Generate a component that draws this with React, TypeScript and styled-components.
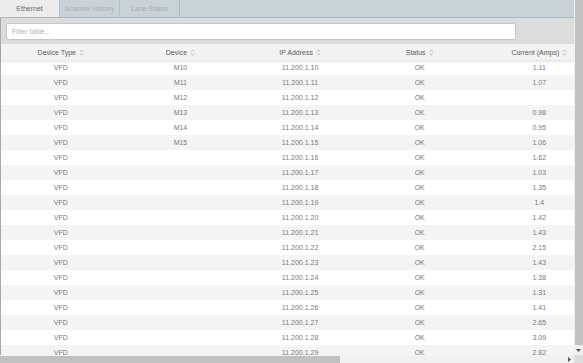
import React, { useState } from 'react'
import styled, { createGlobalStyle } from 'styled-components'

const GlobalStyle = createGlobalStyle`
  html, body {
    margin: 0;
    padding: 0;
    overflow: hidden;
  }
  body {
    font-family: "Liberation Sans", Arial, sans-serif;
  }
`

// the panel plus its own drawn scrollbars
const Frame = styled.div`
  width: 100vw;
  height: 100vh;
  display: grid;
  grid-template-columns: 1fr 9px;
  grid-template-rows: 1fr 8px;
  background: #fff;
`

const Viewport = styled.div`
  overflow: hidden;
  min-width: 0;
  min-height: 0;
`

const VBar = styled.div`
  display: flex;
  flex-direction: column;
  background: #f1f1f1;
`

const HBar = styled.div`
  display: flex;
  background: #f1f1f1;
`

const Thumb = styled.div<{ vertical?: boolean }>`
  background: #c1c1c1;
  ${({ vertical }) => (vertical ? 'flex: 0 0 345px; margin: 0 0 0 1px;' : 'flex: 0 0 340px; margin: 1px 0 0;')}
`

const Track = styled.div`
  flex: 1;
`

const ArrowBtn = styled.div`
  flex: 0 0 9px;
  display: flex;
  align-items: center;
  justify-content: center;
`

const Corner = styled.div`
  background: #dcdcdc;
`

const TabBar = styled.div`
  display: flex;
  height: 18px;
  background: #c9d2d6;
  border-bottom: 1px solid #aeb7bb;
  box-sizing: border-box;
`

const Tab = styled.div<{ active: boolean }>`
  width: 60px;
  display: flex;
  align-items: center;
  justify-content: center;
  font-size: 7px;
  color: ${({ active }) => (active ? '#666' : '#a7afb4')};
  background: ${({ active }) => (active ? '#ebebeb' : 'transparent')};
  border-right: 1px solid #b3bcc0;
  box-sizing: border-box;
  cursor: pointer;
`

const Body = styled.div`
  border-left: 1px solid #a8a8a8;
`

const FilterBar = styled.div`
  height: 26px;
  background: #dcdcdc;
  display: flex;
  align-items: center;
  padding-left: 5px;
  box-sizing: border-box;
`

const FilterInput = styled.input`
  width: 510px;
  height: 17px;
  box-sizing: border-box;
  border: 1px solid #c6c6c6;
  border-radius: 2px;
  background: #fff;
  padding: 0 5px;
  font-family: inherit;
  font-size: 7px;
  color: #666;
  outline: none;
  &::placeholder {
    color: #b4b4b4;
  }
`

const Table = styled.div`
  width: 957px;
`

const Row = styled.div<{ shade?: boolean }>`
  display: grid;
  grid-template-columns: repeat(8, 1fr);
  height: 15px;
  align-items: center;
  background: ${({ shade }) => (shade ? '#f4f4f4' : '#fff')};
`

const HeadRow = styled(Row)`
  height: 16px;
  background: #f3f3f3;
  box-shadow: 0 2px 3px rgba(0, 0, 0, 0.1);
  position: relative;
`

const HeadCell = styled.div`
  display: flex;
  align-items: center;
  justify-content: center;
  gap: 3px;
  font-size: 7px;
  color: #5a5a5a;
  cursor: pointer;
`

const Cell = styled.div`
  text-align: center;
  font-size: 7px;
  color: #7a7a7a;
`

const SortIcon = () => (
  <svg width="5" height="7" viewBox="0 0 5 7">
    <path d="M0.8 2.6L2.5 1L4.2 2.6" fill="none" stroke="#a0a0a0" strokeWidth="0.7" />
    <path d="M0.8 4.4L2.5 6L4.2 4.4" fill="none" stroke="#a0a0a0" strokeWidth="0.7" />
  </svg>
)

const DownArrow = () => (
  <svg width="5" height="3" viewBox="0 0 5 3">
    <path d="M0 0h5L2.5 3z" fill="#555" />
  </svg>
)

const RightArrow = () => (
  <svg width="3" height="5" viewBox="0 0 3 5">
    <path d="M0 0v5L3 2.5z" fill="#555" />
  </svg>
)

const columns = ['Device Type', 'Device', 'IP Address', 'Status', 'Current (Amps)']

const currents = ['1.11', '1.07', '', '0.98', '0.95', '1.06', '1.62', '1.03', '1.35', '1.4',
  '1.42', '1.43', '2.15', '1.43', '1.38', '1.31', '1.41', '2.65', '3.09', '2.82']

const rows = currents.map((amps, i) => ({
  type: 'VFD',
  device: i < 6 ? `M${10 + i}` : '',
  ip: `11.200.1.${10 + i}`,
  status: 'OK',
  amps,
}))

const tabs = ['Ethernet', 'Scanner History', 'Lane Status']

export default function App() {
  const [tab, setTab] = useState('Ethernet')
  const [filter, setFilter] = useState('')

  return (
    <>
      <GlobalStyle />
      <Frame>
        <Viewport>
          <TabBar>
            {tabs.map(t => (
              <Tab key={t} active={t === tab} onClick={() => setTab(t)}>{t}</Tab>
            ))}
          </TabBar>
          <Body>
            <FilterBar>
              <FilterInput placeholder="Filter table..." value={filter} onChange={e => setFilter(e.target.value)} />
            </FilterBar>
            <Table>
              <HeadRow>
                {columns.map(c => (
                  <HeadCell key={c}>{c} <SortIcon /></HeadCell>
                ))}
              </HeadRow>
              {rows.map((r, i) => (
                <Row key={r.ip} shade={i % 2 === 1}>
                  <Cell>{r.type}</Cell>
                  <Cell>{r.device}</Cell>
                  <Cell>{r.ip}</Cell>
                  <Cell>{r.status}</Cell>
                  <Cell>{r.amps}</Cell>
                </Row>
              ))}
            </Table>
          </Body>
        </Viewport>
        <VBar>
          <Thumb vertical />
          <Track />
          <ArrowBtn><DownArrow /></ArrowBtn>
        </VBar>
        <HBar>
          <Thumb />
          <Track />
          <ArrowBtn><RightArrow /></ArrowBtn>
        </HBar>
        <Corner />
      </Frame>
    </>
  )
}
